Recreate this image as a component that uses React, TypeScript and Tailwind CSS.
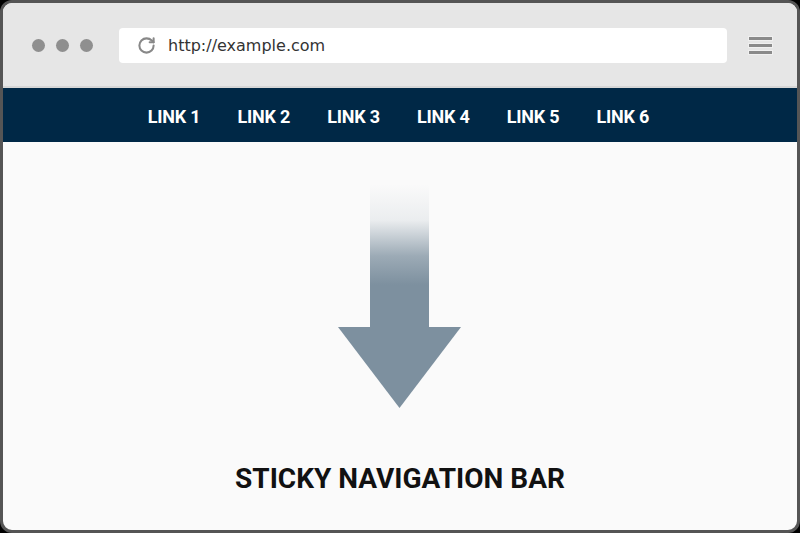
import { RotateCw } from 'lucide-react';

const links = ['LINK 1', 'LINK 2', 'LINK 3', 'LINK 4', 'LINK 5', 'LINK 6'];

export default function App() {
  return (
    <div className="w-[800px] h-[533px] bg-black">
      <div className="w-full h-full rounded-[12px] border-[3px] border-[#555] bg-[#fafafa] overflow-hidden flex flex-col">
        {/* Browser toolbar */}
        <div className="h-[85px] shrink-0 bg-[#e6e6e6] border-b-2 border-[#d6d6d6] flex items-center pl-[29px] pr-[24px] pt-[2px]">
          <div className="flex gap-[11px]">
            <span className="w-[13px] h-[13px] rounded-full bg-[#8f8f8f]" />
            <span className="w-[13px] h-[13px] rounded-full bg-[#8f8f8f]" />
            <span className="w-[13px] h-[13px] rounded-full bg-[#8f8f8f]" />
          </div>
          <div className="ml-[26px] w-[608px] h-[35px] bg-white rounded-[4px] flex items-center pl-[18px]">
            <RotateCw className="w-[19px] h-[19px] text-[#888]" strokeWidth={2.6} />
            <span className="ml-[12px] text-[16px] text-[#333] font-['DejaVu_Sans',sans-serif]">http://example.com</span>
          </div>
          <div className="ml-auto flex flex-col gap-[2px]">
            <span className="w-[25px] h-[5px] bg-[#8a8a8a] border border-[#f0f0f0]" />
            <span className="w-[25px] h-[5px] bg-[#8a8a8a] border border-[#f0f0f0]" />
            <span className="w-[25px] h-[5px] bg-[#8a8a8a] border border-[#f0f0f0]" />
          </div>
        </div>

        {/* Sticky nav */}
        <nav className="h-[54px] shrink-0 bg-[#002846] flex items-center justify-center gap-[37px] pr-[3px] pt-[3px]">
          {links.map((l) => (
            <span key={l} className="text-white text-[18px] font-bold font-['Roboto',sans-serif] tracking-[-0.2px]">
              {l}
            </span>
          ))}
        </nav>

        {/* Content */}
        <div className="flex-1 flex flex-col items-center">
          <svg width="124" height="226" viewBox="0 0 124 226" className="mt-[42px]">
            <defs>
              <linearGradient id="shaft" x1="0" y1="0" x2="0" y2="1">
                <stop offset="0" stopColor="#7d909f" stopOpacity="0" />
                <stop offset="0.25" stopColor="#7d909f" stopOpacity="0.12" />
                <stop offset="0.5" stopColor="#7d909f" stopOpacity="0.75" />
                <stop offset="0.7" stopColor="#7d909f" stopOpacity="1" />
                <stop offset="1" stopColor="#7d909f" stopOpacity="1" />
              </linearGradient>
            </defs>
            <rect x="32" y="0" width="59" height="144" fill="url(#shaft)" />
            <polygon points="0,143 123,143 61.5,224" fill="#7d909f" />
          </svg>
          <h1 className="mt-[48px] text-[28px] font-bold text-[#111] font-['Roboto',sans-serif]">
            STICKY NAVIGATION BAR
          </h1>
        </div>
      </div>
    </div>
  );
}
